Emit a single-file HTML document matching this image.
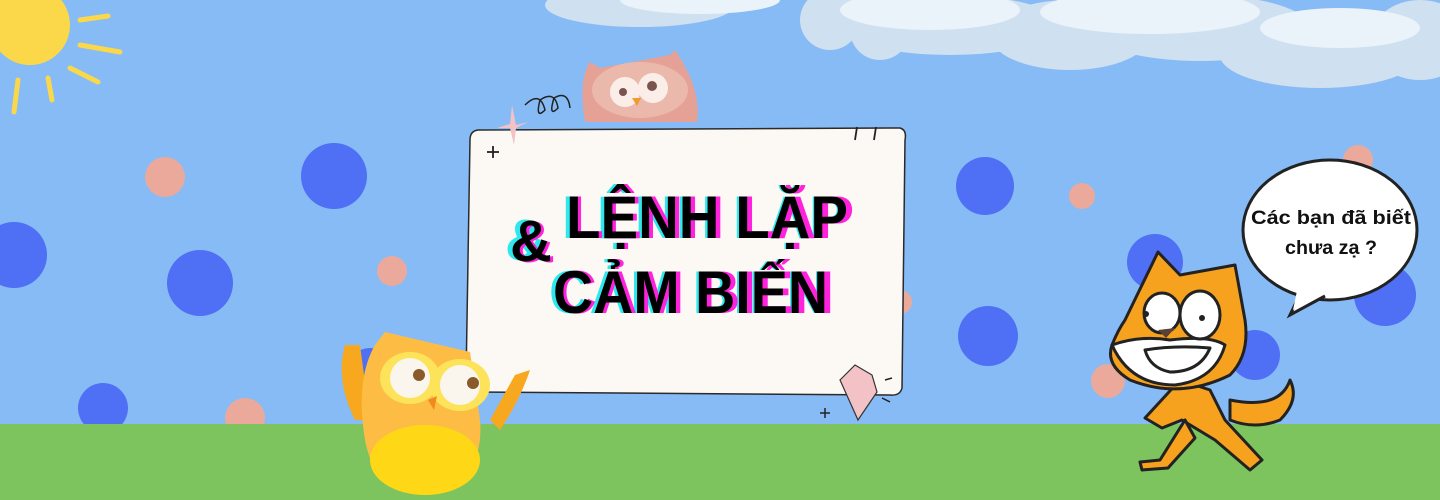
<!DOCTYPE html>
<html><head><meta charset="utf-8"><style>
html,body{margin:0;padding:0;width:1440px;height:500px;overflow:hidden;background:#87bbf5}
svg{display:block}
</style></head><body>
<svg width="1440" height="500" viewBox="0 0 1440 500" xmlns="http://www.w3.org/2000/svg">
<rect width="1440" height="500" fill="#87bbf5"/>
<!-- clouds -->
<g fill="#cfe0f0">
<ellipse cx="640" cy="5" rx="95" ry="22"/>
<circle cx="830" cy="20" r="30"/><circle cx="880" cy="30" r="30"/>
<ellipse cx="950" cy="25" rx="110" ry="30"/>
<ellipse cx="1070" cy="35" rx="80" ry="35"/>
<ellipse cx="1200" cy="28" rx="110" ry="33"/>
<ellipse cx="1320" cy="55" rx="100" ry="33"/>
<ellipse cx="1420" cy="40" rx="50" ry="40"/>
</g>
<g fill="#eaf2fa">
<ellipse cx="700" cy="0" rx="80" ry="14"/>
<ellipse cx="930" cy="10" rx="90" ry="20"/>
<ellipse cx="1150" cy="12" rx="110" ry="22"/>
<ellipse cx="1340" cy="28" rx="80" ry="20"/>
</g>
<!-- sun -->
<circle cx="30" cy="25" r="40" fill="#fbd84a"/>
<g stroke="#fbd84a" stroke-width="5" stroke-linecap="round">
<line x1="18" y1="80" x2="14" y2="112"/><line x1="48" y1="78" x2="52" y2="100"/>
<line x1="70" y1="68" x2="98" y2="82"/><line x1="80" y1="45" x2="120" y2="52"/>
<line x1="80" y1="20" x2="108" y2="16"/>
</g>
<!-- dots -->
<g fill="#4f6ff5">
<circle cx="334" cy="176" r="33"/><circle cx="14" cy="255" r="33"/><circle cx="200" cy="283" r="33"/>
<circle cx="103" cy="408" r="25"/><circle cx="985" cy="186" r="29"/><circle cx="988" cy="336" r="30"/>
<circle cx="1385" cy="295" r="31"/><circle cx="1155" cy="262" r="28"/><circle cx="1255" cy="355" r="25"/>
<circle cx="370" cy="370" r="22"/>
</g>
<g fill="#eaa99b">
<circle cx="165" cy="177" r="20"/><circle cx="392" cy="271" r="15"/><circle cx="1082" cy="196" r="13"/>
<circle cx="1108" cy="381" r="17"/><circle cx="245" cy="418" r="20"/><circle cx="1358" cy="160" r="15"/>
<circle cx="900" cy="302" r="12"/>
</g>
<!-- grass -->
<rect x="0" y="424" width="1440" height="76" fill="#7dc35e"/>
<!-- card -->
<path d="M478 130 L900 128 Q907 130 905 140 L902 388 Q900 396 890 395 L475 392 Q465 390 466 380 L470 140 Q470 131 478 130Z" fill="#fcf8f4" stroke="#2a2a2a" stroke-width="1.5"/>
<g stroke="#222" stroke-width="1.8"><line x1="487" y1="152" x2="499" y2="152"/><line x1="493" y1="146" x2="493" y2="158"/>
<line x1="857" y1="127" x2="855" y2="140"/><line x1="876" y1="127" x2="874" y2="140"/></g>
<!-- pink star & scribble -->
<path d="M512 105 L516 125 L528 122 L516 128 L514 145 L510 128 L497 128 L510 124Z" fill="#f2c2c7"/>
<path d="M525 105 q15 -15 20 5 q-10 10 -5 -10 q15 -10 18 8 q-10 10 -4 -10 q14 -8 16 10" fill="none" stroke="#222" stroke-width="1.5"/>
<!-- pink owl -->
<path d="M585 122 Q578 80 590 62 L600 68 L670 55 L675 50 Q702 90 697 122Z" fill="#e5a196"/>
<ellipse cx="640" cy="90" rx="48" ry="28" fill="#eab9ac"/>
<circle cx="625" cy="92" r="15" fill="#fbeee8"/><circle cx="653" cy="88" r="15" fill="#fbeee8"/>
<circle cx="623" cy="92" r="4" fill="#7a5550"/><circle cx="652" cy="86" r="5" fill="#7a5550"/>
<path d="M632 98 L641 98 L637 106Z" fill="#f29a2e"/>
<!-- text -->
<g font-family="Liberation Sans, DejaVu Sans, sans-serif" font-weight="900">
<text x="505" y="260" font-size="58" fill="#2ee8ee">&amp;</text>
<text x="513" y="262" font-size="58" fill="#ff22dd">&amp;</text>
<text x="510" y="261" font-size="58" fill="#000">&amp;</text>
<g font-size="60">
<text x="562" y="238" textLength="285" lengthAdjust="spacingAndGlyphs" fill="#2ee8ee">LỆNH LẶP</text>
<text x="569" y="238" textLength="285" lengthAdjust="spacingAndGlyphs" fill="#ff22dd">LỆNH LẶP</text>
<text x="566" y="238" textLength="282" lengthAdjust="spacingAndGlyphs" fill="#000">LỆNH LẶP</text>
<text x="549" y="313" textLength="278" lengthAdjust="spacingAndGlyphs" fill="#2ee8ee">CẢM BIẾN</text>
<text x="556" y="313" textLength="278" lengthAdjust="spacingAndGlyphs" fill="#ff22dd">CẢM BIẾN</text>
<text x="553" y="313" textLength="275" lengthAdjust="spacingAndGlyphs" fill="#000">CẢM BIẾN</text>
</g></g>
<!-- gem -->
<path d="M840 380 L855 365 L872 375 L877 392 L858 420 Z" fill="#f2c2c7" stroke="#333" stroke-width="1.2"/>
<g stroke="#222" stroke-width="1.5"><line x1="820" y1="413" x2="830" y2="413"/><line x1="825" y1="408" x2="825" y2="418"/>
<line x1="885" y1="380" x2="892" y2="378"/><line x1="882" y1="398" x2="890" y2="402"/></g>
<!-- yellow owl -->
<path d="M345 345 Q335 380 355 420 L370 420 L360 345Z" fill="#f7a81f"/>
<path d="M530 370 Q520 400 500 430 L490 420 L515 375Z" fill="#f7a81f"/>
<path d="M375 345 L385 332 L470 352 L480 420 Q485 480 430 495 Q375 495 365 440 Q355 380 375 345Z" fill="#fdbd45"/>
<ellipse cx="425" cy="460" rx="55" ry="35" fill="#fed816"/>
<ellipse cx="410" cy="378" rx="30" ry="26" fill="#fde35a"/><ellipse cx="460" cy="385" rx="30" ry="26" fill="#fde35a"/>
<circle cx="410" cy="378" r="20" fill="#faf6ee"/><circle cx="460" cy="385" r="20" fill="#faf6ee"/>
<circle cx="419" cy="375" r="6" fill="#8a5a2a"/><circle cx="473" cy="383" r="6" fill="#8a5a2a"/>
<path d="M428 400 L437 396 L434 410Z" fill="#f08a1c"/>
<!-- speech bubble -->
<ellipse cx="1330" cy="230" rx="87" ry="70" fill="#fff" stroke="#222" stroke-width="3"/>
<path d="M1302 290 L1290 315 L1325 296" fill="#fff" stroke="#222" stroke-width="3"/>
<path d="M1298 286 L1293 310 L1328 292Z" fill="#fff"/>
<g font-family="Liberation Sans, sans-serif" font-weight="700" font-size="19" fill="#111">
<text x="1251" y="224" textLength="160" lengthAdjust="spacingAndGlyphs">Các bạn đã biết</text>
<text x="1285" y="254" textLength="92" lengthAdjust="spacingAndGlyphs">chưa zạ ?</text></g>
<!-- cat -->
<g stroke="#222" stroke-width="3" stroke-linejoin="round">
<path d="M1145 418 L1162 428 L1182 420 L1215 440 L1250 470 L1262 460 L1225 420 L1210 390 L1180 380Z" fill="#f7a21f"/>
<path d="M1185 420 L1160 460 L1140 462 L1142 470 L1168 468 L1195 438Z" fill="#f7a21f"/>
<path d="M1230 400 Q1280 410 1290 380 Q1300 400 1280 420 Q1255 430 1230 420Z" fill="#f7a21f"/>
<path d="M1125 320 L1158 252 L1180 275 L1235 265 L1245 320 Q1250 355 1230 375 Q1180 400 1130 380 Q1105 365 1112 345 Q1118 330 1125 320Z" fill="#f7a21f"/>
<path d="M1112 345 Q1140 335 1170 340 Q1210 335 1225 345 Q1215 380 1175 385 Q1130 385 1112 345Z" fill="#fff"/>
<ellipse cx="1162" cy="313" rx="18" ry="20" fill="#fff"/><ellipse cx="1200" cy="315" rx="20" ry="24" fill="#fff"/>
<path d="M1145 350 Q1175 345 1210 348 Q1200 372 1170 372 Q1150 368 1145 350Z" fill="#fff"/>
</g>
<circle cx="1146" cy="314" r="3" fill="#222"/><circle cx="1202" cy="318" r="3" fill="#222"/>
<path d="M1158 330 L1175 328 L1166 338Z" fill="#5b4035"/>
</svg>
</body></html>
